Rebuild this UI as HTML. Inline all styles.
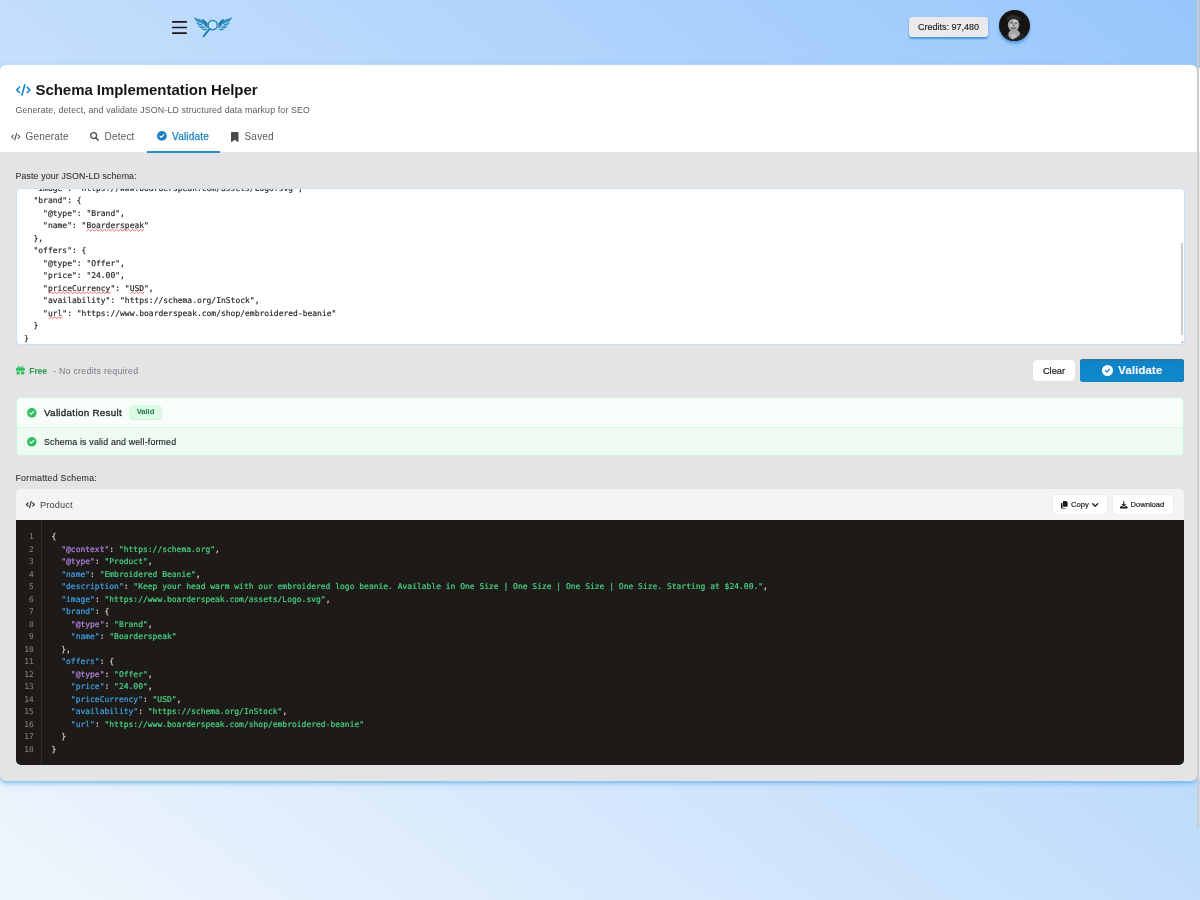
<!DOCTYPE html>
<html lang="en">
<head>
<meta charset="utf-8">
<title>Schema Implementation Helper</title>
<style>
*{box-sizing:border-box;margin:0;padding:0}
html,body{width:1200px;height:900px;overflow:hidden}
.card,.credits{will-change:opacity;opacity:.999}
body{font-family:"Liberation Sans",sans-serif;color:#1a1a1a;position:relative;
background:linear-gradient(to top right,#f0f6fd 0%,#c3defc 50%,#97c6fb 100%);}
.abs{position:absolute}
/* header */
.logo{position:absolute;left:192px;top:15px;width:42px;height:24px}
.credits{position:absolute;left:909px;top:17px;width:79.2px;height:19.8px;background:#ebebec;border-radius:3px;
font-size:9px;line-height:21.7px;text-align:center;color:#222;-webkit-text-stroke:.15px #222;box-shadow:0 1.5px 2px rgba(50,140,215,.8)}
.avatar{position:absolute;left:999.1px;top:10px;width:30.8px;height:30.8px;border-radius:50%;background:#161313;overflow:hidden;
box-shadow:0 2.5px 3px rgba(50,140,215,.75)}
/* page scrollbar */
.pscroll{position:absolute;left:1197.2px;top:0;width:1.8px;height:829px;background:#cdcdcd;z-index:5}
/* card */
.card{position:absolute;left:0;top:65px;width:1197px;height:715.8px;background:#e4e4e6;border-radius:6px;
box-shadow:0 2px 5px rgba(95,172,235,.85),0 -.3px 0 #fff;overflow:hidden}
.cardhead{position:absolute;left:0;top:0;width:100%;height:87px;background:#fff}
.title{position:absolute;left:35.5px;top:15.4px;font-size:15px;font-weight:700;line-height:20px;color:#16161a;letter-spacing:-.05px;white-space:nowrap}
.sub{position:absolute;left:15.5px;top:39.3px;font-size:8.8px;line-height:12px;color:#5a5a5e;letter-spacing:.145px;white-space:nowrap}
.tab{position:absolute;top:65.4px;font-size:10px;line-height:14px;color:#5b5b5f;letter-spacing:.2px;white-space:nowrap}
.tab.on{color:#1b82c5;-webkit-text-stroke:.25px #1b82c5}
.tabline{position:absolute;left:146.7px;top:85.9px;width:73.3px;height:2.1px;background:#2a8bcd;z-index:2}
.lbl{position:absolute;left:15.5px;font-size:8.8px;line-height:12px;color:#38383c;-webkit-text-stroke:.12px #38383c;letter-spacing:.13px;white-space:nowrap}
.ta{position:absolute;left:16px;top:122.8px;width:1168.7px;height:157.2px;background:#fff;border:1px solid #cbdff6;border-radius:4px;overflow:hidden}
.ta pre{position:absolute;left:6.9px;top:-6px;-webkit-text-stroke:.15px #222;font-family:"DejaVu Sans Mono","Liberation Mono",monospace;font-size:7.995px;line-height:12.5px;color:#222}
.tathumb{position:absolute;left:1163.8px;top:54.2px;width:2.2px;height:92.3px;background:#cdcdcd}
.tagrip{position:absolute;left:1164.3px;top:152.2px;width:0;height:0;border-left:2.6px solid transparent;border-bottom:2.6px solid #8d8d8d}

/* free row */
.free{position:absolute;left:29.3px;top:299.8px;font-size:8.7px;line-height:12px;font-weight:700;color:#2c9a53;letter-spacing:-.2px;white-space:nowrap}
.nocred{position:absolute;left:53px;top:299.8px;font-size:8.8px;line-height:12px;color:#77777c;letter-spacing:.27px;white-space:nowrap}
.btn-clear{position:absolute;left:1033px;top:295px;width:42px;height:21px;background:#fff;border-radius:4px;font-size:9.3px;line-height:22.2px;text-align:center;color:#1c1c20;-webkit-text-stroke:.2px #1c1c20;box-shadow:0 0 1px rgba(0,0,0,.12)}
.btn-val{position:absolute;left:1080px;top:294px;width:104px;height:23px;background:#0f85ca;border-radius:2.5px;color:#fff;font-weight:700;font-size:11.5px;line-height:23px;letter-spacing:.1px;white-space:nowrap;box-shadow:inset 0 2px 0 rgba(90,90,90,.32),inset -1px 0 0 rgba(90,90,90,.2)}
.btn-val span{position:absolute;left:38px;top:0}
/* result */
.res{position:absolute;left:16px;top:332px;width:1168px;height:59px;background:#f7fdf9;border:1px solid #d0f4dc;border-radius:5px;overflow:hidden}
.res .r2{position:absolute;left:0;top:29.3px;width:100%;height:29px;background:#f0fbf4;border-top:1.7px solid #d8f7e2}
.res .h{position:absolute;left:27px;top:8.2px;font-size:9.8px;line-height:14px;color:#1c1c20;white-space:nowrap;font-weight:400;letter-spacing:.31px;-webkit-text-stroke:.3px #1c1c20}
.badge{position:absolute;left:112px;top:7.3px;width:33px;height:14px;border-radius:4.5px;background:#dcf9e6;color:#1f7a43;font-size:7.6px;font-weight:700;line-height:14px;text-align:center;box-shadow:0 1px 1px rgba(60,160,100,.18)}
.res .m{position:absolute;left:27px;top:38.2px;font-size:8.8px;line-height:12px;color:#242428;-webkit-text-stroke:.15px #242428;letter-spacing:.18px;white-space:nowrap}
/* code box */
.cb{position:absolute;left:16px;top:424px;width:1168px;height:276px}
.cbd{position:absolute;left:0;top:31px;width:100%;height:245.1px;background:#1e1a17;border-radius:0 0 5px 5px}
.cbh{position:absolute;left:0;top:0;width:100%;height:31px;background:#f4f4f6;border-radius:5px 5px 0 0}
.cbh .nm{position:absolute;left:24px;top:9.6px;font-size:9.2px;line-height:13px;color:#3c3c40;letter-spacing:.14px;white-space:nowrap}
.sbtn{position:absolute;top:6px;height:19px;background:#fff;border-radius:3px;font-size:7.6px;line-height:19px;color:#1c1c20;-webkit-text-stroke:.2px #1c1c20;white-space:nowrap;box-shadow:0 0 0 .6px #e9e9ec}
.gut{position:absolute;left:0;top:31px;width:25.5px;height:245.1px;border-right:1px solid #28302d}
.ln{position:absolute;left:0;top:42.2px;width:17.6px;text-align:right;font-family:"DejaVu Sans Mono","Liberation Mono",monospace;font-size:7.8px;line-height:12.5px;color:#807e7c;-webkit-text-stroke:.1px}
.code{position:absolute;left:35.6px;top:42.2px;font-family:"DejaVu Sans Mono","Liberation Mono",monospace;font-size:7.998px;line-height:12.5px;color:#d2d0ce;-webkit-text-stroke:.2px}
.k{color:#3ba2e6}.a{color:#b283e2}.s{color:#47d285}

svg{position:absolute;overflow:visible;z-index:3}
.sqg{fill:none;stroke:#e4262c;stroke-width:.7}
</style>
</head>
<body>
<svg style="left:172px;top:20px" width="15" height="15" viewBox="0 0 15 15"><path d="M.8 1.900H14.200M.8 7.500H14.200M.8 13.100H14.200" stroke="#1d1413" stroke-width="1.700" stroke-linecap="round" fill="none"/></svg>
<svg class="logo" viewBox="0 0 42 24" style="left:192px;top:15px" width="42" height="24">
<g fill="#2a8cbd">
<path d="M1.6 2.2c2.300.6 4.300 1.700 6 3.300-.2 1-.1 1.900.3 2.800C5.300 7.200 3.100 5.200 1.600 2.200z"/>
<path d="M5.900 3.400c2.200.6 4 1.800 5.400 3.500-.3.900-.2 1.800.2 2.700-2.400-1.300-4.400-3.300-5.600-6.200z"/>
<path d="M3.300 7.100c2.100 1.200 4.200 1.800 6.400 1.700.1.800.5 1.500 1.200 2.100-2.900.1-5.700-1.100-7.600-3.800z"/>
<path d="M5.900 10.700c2 .8 4 .9 6 .5.300.7.800 1.300 1.500 1.700-2.800.8-5.500.2-7.500-2.200z"/>
<path d="M8.800 13.600c1.700.5 3.400.4 5.100-.2.400.6 1 1 1.700 1.300-2.300 1.100-4.800.9-6.800-1.100z"/>
<path d="M9.800 3.800c2.600.9 4.600 2.500 5.900 4.900-.5 1.800-.3 3.500.5 5.100-3.300-2-5.600-5.400-6.400-10z" fill="#1f7ba9"/>
<path d="M40.400 2.200c-2.300.6-4.300 1.700-6 3.300.2 1 .1 1.900-.3 2.800 2.600-1.100 4.800-3.100 6.300-6.100z"/>
<path d="M36.100 3.400c-2.200.6-4 1.800-5.400 3.500.3.900.2 1.800-.2 2.700 2.400-1.300 4.400-3.300 5.600-6.200z"/>
<path d="M38.700 7.100c-2.100 1.200-4.200 1.800-6.400 1.700-.1.800-.5 1.500-1.200 2.100 2.900.1 5.700-1.100 7.600-3.800z"/>
<path d="M36.100 10.700c-2 .8-4 .9-6 .5-.3.700-.8 1.300-1.500 1.700 2.800.8 5.500.2 7.500-2.200z"/>
<path d="M33.200 13.600c-1.700.5-3.400.4-5.100-.2-.4.600-1 1-1.700 1.300 2.300 1.100 4.800.9 6.800-1.100z"/>
<path d="M32.200 3.800c-2.600.9-4.600 2.500-5.900 4.900.5 1.800.3 3.500-.5 5.100 3.300-2 5.600-5.400 6.400-10z" fill="#1f7ba9"/>
</g>
<circle cx="20.700" cy="10.100" r="4.600" fill="#cfe6fd" fill-opacity=".6" stroke="#2a8cbd" stroke-width="1.500"/>
<path d="M17 14.600 11.700 21.100" stroke="#2183b6" stroke-width="2.100" stroke-linecap="round" fill="none"/>
</svg>
<div class="credits">Credits: 97,480</div>
<div class="avatar"><svg viewBox="0 0 30.800 30.800" width="30.8" height="30.800" style="left:0;top:0">
<defs><filter id="bl" x="-30%" y="-30%" width="160%" height="160%"><feGaussianBlur stdDeviation=".55"/></filter></defs>
<g filter="url(#bl)">
<path d="M4.500 27.500c1.500-2.300 3.500-3.600 5.500-4.300l10.500-1.200c2.500.9 4.500 2.300 6 4.500v5h-22z" fill="#232323"/>
<path d="M9.700 22.400l2.500-2.900h5.200l3 2.300c.8 1.200.6 2.300.2 3.200-2 2-4.500 3.700-7 4.600-2.200-1-4-2.600-4.300-4.700z" fill="#a6a6a6"/>
<path d="M11 23c1.500 2 4 2.500 6.500.5l-1 3.500-3.500 1.500z" fill="#c4c4c4"/>
<ellipse cx="14.600" cy="15" rx="5.700" ry="6.300" fill="#a3a3a3"/>
<ellipse cx="16.400" cy="11.300" rx="2.600" ry="1.500" fill="#cdcdcd"/>
<ellipse cx="12" cy="15.500" rx="1.600" ry="2.200" fill="#c2c2c2"/>
<ellipse cx="17.300" cy="16" rx="1.500" ry="2" fill="#bcbcbc"/>
<path d="M7.600 11.300c-.6-4 2-6.400 6.800-6.400 4.800 0 7.800 2.400 7.300 6.700-1.200-2-2.700-2.700-5.200-2.900-3-.2-6.200.3-8.900 2.600z" fill="#2a2d2b"/>
<ellipse cx="12.300" cy="12.800" rx="1.300" ry=".7" fill="#555"/>
<ellipse cx="16.900" cy="13" rx="1.200" ry=".7" fill="#5a5a5a"/>
<path d="M14.300 12.500l-.5 3.500 1.300.5z" fill="#777"/>
<path d="M11.900 17.800q2.600 1.800 5.200 0" stroke="#4a4a4a" stroke-width=".9" fill="none"/>
</g></svg></div>
<div class="pscroll"></div><div class="abs" style="z-index:4;left:1199px;top:68px;width:1px;height:84px;background:#fff"></div><div class="abs" style="z-index:4;left:1199px;top:152px;width:1px;height:627px;background:#e4e4e6"></div>

<div class="card">
  <div class="cardhead">
    <div class="title">Schema Implementation Helper</div>
    <div class="sub">Generate, detect, and validate JSON-LD structured data markup for SEO</div>
    <div class="tab" style="left:25.5px">Generate</div>
    <div class="tab" style="left:104.5px">Detect</div>
    <div class="tab on" style="left:172px">Validate</div>
    <div class="tab" style="left:244.5px">Saved</div>
    <div class="tabline"></div>
  </div>
  <div class="lbl" style="top:105.4px">Paste your JSON-LD schema:</div>
  <div class="ta"><pre>  "image": "https://www.boarderspeak.com/assets/Logo.svg",
  "brand": {
    "@type": "Brand",
    "name": "Boarderspeak"
  },
  "offers": {
    "@type": "Offer",
    "price": "24.00",
    "priceCurrency": "USD",
    "availability": "https://schema.org/InStock",
    "url": "https://www.boarderspeak.com/shop/embroidered-beanie"
  }
}</pre><svg style="left:-.5px;top:-.4px" width="1166" height="154"><path class="sqg" d="M69.5 43.1L71.5 41.3L73.5 43.1L75.5 41.3L77.5 43.1L79.5 41.3L81.5 43.1L83.5 41.3L85.5 43.1L87.5 41.3L89.5 43.1L91.5 41.3L93.5 43.1L95.5 41.3L97.5 43.1L99.5 41.3L101.5 43.1L103.5 41.3L105.5 43.1L107.5 41.3L109.5 43.1L111.5 41.3L113.5 43.1L115.5 41.3L117.5 43.1L119.5 41.3L121.5 43.1L123.5 41.3L125.5 43.1L126.6 41.3"/><path class="sqg" d="M31.9 105.6L33.9 103.8L35.9 105.6L37.9 103.8L39.9 105.6L41.9 103.8L43.9 105.6L45.9 103.8L47.9 105.6L49.9 103.8L51.9 105.6L53.9 103.8L55.9 105.6L57.9 103.8L59.9 105.6L61.9 103.8L63.9 105.6L65.9 103.8L67.9 105.6L69.9 103.8L71.9 105.6L73.9 103.8L75.9 105.6L77.9 103.8L79.9 105.6L81.9 103.8L83.9 105.6L85.9 103.8L87.9 105.6L89.9 103.8L91.9 105.6L93.6 103.8"/><path class="sqg" d="M113.5 105.6L115.5 103.8L117.5 105.6L119.5 103.8L121.5 105.6L123.5 103.8L125.5 105.6L127.2 103.8"/><path class="sqg" d="M31.9 130.6L33.9 128.8L35.9 130.6L37.9 128.8L39.9 130.6L41.9 128.8L43.9 130.6L45.6 128.8"/></svg><div class="tathumb"></div><div class="tagrip"></div></div>

  <svg style="left:15.7px;top:18.6px" width="14.7" height="11.76" viewBox="0 0 640 512"><g fill="none" stroke="#1c83d2" stroke-width="72" stroke-linecap="round" stroke-linejoin="round"><path d="M150 140 34 256l116 116"/><path d="M490 140l116 116-116 116"/><path d="M384 34 256 478"/></g></svg>
  <svg style="left:10.9px;top:67.9px" width="9.4" height="7.52" viewBox="0 0 640 512"><g fill="none" stroke="#4c4c50" stroke-width="70" stroke-linecap="round" stroke-linejoin="round"><path d="M150 140 34 256l116 116"/><path d="M490 140l116 116-116 116"/><path d="M384 34 256 478"/></g></svg>
  <svg style="left:90.400px;top:66.900px" width="8.9" height="8.900" viewBox="0 0 512 512"><circle cx="208" cy="208" r="170" fill="none" stroke="#4c4c50" stroke-width="72"/><path d="M335 335 472 472" stroke="#4c4c50" stroke-width="78" stroke-linecap="round"/></svg>
  <svg style="left:156.90px;top:66.10px" width="9.8" height="9.8" viewBox="0 0 512 512"><circle cx="256" cy="256" r="256" fill="#1b82c8"/><path d="M156 264l68 66 134-140" fill="none" stroke="#fff" stroke-width="58" stroke-linecap="round" stroke-linejoin="round"/></svg>
  <svg style="left:231.200px;top:66.700px" width="7.5" height="10" viewBox="0 0 384 512"><path fill="#4c4c50" d="M0 48A48 48 0 0 1 48 0H336a48 48 0 0 1 48 48V488a22 22 0 0 1-35 18L192 400 35 506A22 22 0 0 1 0 488z"/></svg>
  <svg style="left:15.600px;top:301.200px" width="8.8" height="8.400" viewBox="0 0 512 488"><g fill="#34c05f"><rect x="0" y="118" width="512" height="160" rx="30"/><path d="M30 326h190v162H70a40 40 0 0 1-40-40zM292 326h190v122a40 40 0 0 1-40 40H292z"/><path fill-rule="evenodd" d="M256 130C150 135 60 130 70 60 80-10 200-10 256 90 312-10 432-10 442 60c10 70-80 75-186 70zM215 105c-30-50-75-60-85-35s40 38 85 35zM297 105c30-50 75-60 85-35s-40 38-85 35z"/></g></svg>
  <svg style="left:1102.00px;top:299.90px" width="11" height="11" viewBox="0 0 512 512"><circle cx="256" cy="256" r="256" fill="#fff"/><path d="M156 264l68 66 134-140" fill="none" stroke="#0f85ca" stroke-width="58" stroke-linecap="round" stroke-linejoin="round"/></svg>
  <svg style="left:26.60px;top:342.60px" width="9.6" height="9.6" viewBox="0 0 512 512"><circle cx="256" cy="256" r="256" fill="#33bf60"/><path d="M156 264l68 66 134-140" fill="none" stroke="#fff" stroke-width="58" stroke-linecap="round" stroke-linejoin="round"/></svg>
  <svg style="left:26.60px;top:372.10px" width="9.6" height="9.6" viewBox="0 0 512 512"><circle cx="256" cy="256" r="256" fill="#33bf60"/><path d="M156 264l68 66 134-140" fill="none" stroke="#fff" stroke-width="58" stroke-linecap="round" stroke-linejoin="round"/></svg>
  <div class="free">Free</div>
  <div class="nocred">- No credits required</div>
  <div class="btn-clear">Clear</div>
  <div class="btn-val"><span>Validate</span></div>

  <div class="res">
    <div class="h">Validation Result</div>
    <div class="badge">Valid</div>
    <div class="r2"></div>
    <div class="m">Schema is valid and well-formed</div>
  </div>

  <div class="lbl" style="top:406.9px;letter-spacing:.25px">Formatted Schema:</div>
  <div class="cb">
    <div class="cbh">
      <svg style="left:10.4px;top:12.1px" width="8.8" height="7.04" viewBox="0 0 640 512"><g fill="none" stroke="#2c2c30" stroke-width="82" stroke-linecap="round" stroke-linejoin="round"><path d="M150 140 34 256l116 116"/><path d="M490 140l116 116-116 116"/><path d="M384 34 256 478"/></g></svg>
      <svg style="left:1045px;top:11.600px" width="6.7" height="7.600" viewBox="0 0 448 512"><path fill="#1c1c20" d="M176 0h176l96 96v240a48 48 0 0 1-48 48H176a48 48 0 0 1-48-48V48a48 48 0 0 1 48-48z"/><path fill="#1c1c20" d="M48 128h48v256a80 80 0 0 0 80 80h144v0a48 48 0 0 1-48 48H48a48 48 0 0 1-48-48V176a48 48 0 0 1 48-48z"/></svg>
      <svg style="left:1076.300px;top:13.500px" width="6.400" height="4" viewBox="0 0 6.400 4"><path d="M.7.700 3.200 3.200 5.700.7" fill="none" stroke="#1c1c20" stroke-width="1.250" stroke-linecap="round" stroke-linejoin="round"/></svg>
      <svg style="left:1104.400px;top:11.600px" width="7.600" height="7.600" viewBox="0 0 512 512"><path d="M256 32V330M150 230l106 106 106-106" fill="none" stroke="#1c1c20" stroke-width="70" stroke-linecap="round" stroke-linejoin="round"/><path fill="#1c1c20" d="M48 352h120l60 56h56l60-56h120a48 48 0 0 1 48 48v64a48 48 0 0 1-48 48H48a48 48 0 0 1-48-48v-64a48 48 0 0 1 48-48z"/></svg>
      <div class="nm">Product</div>
      <div class="sbtn" style="left:1037px;width:54px"><span style="position:absolute;left:18px">Copy</span></div>
      <div class="sbtn" style="left:1097px;width:60px"><span style="position:absolute;left:17.5px">Download</span></div>
    </div>
    <div class="cbd"></div>
    <div class="gut"></div>
    <pre class="ln">1
2
3
4
5
6
7
8
9
10
11
12
13
14
15
16
17
18</pre>
<pre class="code">{
  <span class="a">"@context"</span>: <span class="s">"https://schema.org"</span>,
  <span class="a">"@type"</span>: <span class="s">"Product"</span>,
  <span class="k">"name"</span>: <span class="s">"Embroidered Beanie"</span>,
  <span class="k">"description"</span>: <span class="s">"Keep your head warm with our embroidered logo beanie. Available in One Size | One Size | One Size | One Size. Starting at $24.00."</span>,
  <span class="k">"image"</span>: <span class="s">"https://www.boarderspeak.com/assets/Logo.svg"</span>,
  <span class="k">"brand"</span>: {
    <span class="a">"@type"</span>: <span class="s">"Brand"</span>,
    <span class="k">"name"</span>: <span class="s">"Boarderspeak"</span>
  },
  <span class="k">"offers"</span>: {
    <span class="a">"@type"</span>: <span class="s">"Offer"</span>,
    <span class="k">"price"</span>: <span class="s">"24.00"</span>,
    <span class="k">"priceCurrency"</span>: <span class="s">"USD"</span>,
    <span class="k">"availability"</span>: <span class="s">"https://schema.org/InStock"</span>,
    <span class="k">"url"</span>: <span class="s">"https://www.boarderspeak.com/shop/embroidered-beanie"</span>
  }
}</pre>
  </div>
</div>
</body>
</html>
